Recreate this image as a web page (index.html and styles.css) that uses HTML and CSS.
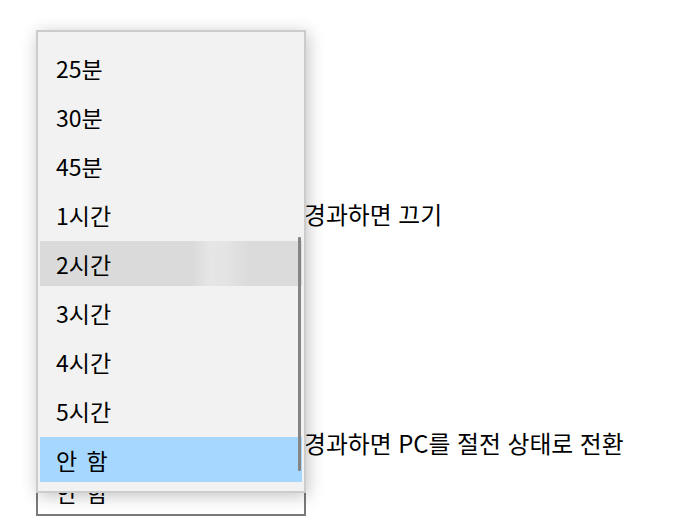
FILE: index.html
```html
<!DOCTYPE html>
<html lang="ko">
<head>
<meta charset="utf-8">
<link rel="stylesheet" href="styles.css">
</head>
<body>
<div class="page">
  <div class="setting first">
    <div class="label">경과하면 끄기</div>
    <div class="combo"></div>
  </div>
  <div class="setting second">
    <div class="label">경과하면 PC를 절전 상태로 전환</div>
    <div class="combo"><span>안 함</span><svg class="chev" width="12" height="8" viewBox="0 0 12 8"><path d="M1 1.5 L6 6.5 L11 1.5" fill="none" stroke="#000" stroke-width="1.4"/></svg></div>
  </div>

  <div class="popup">
    <ul class="list">
      <li class="item"><span>25분</span></li>
      <li class="item"><span>30분</span></li>
      <li class="item"><span>45분</span></li>
      <li class="item"><span>1시간</span></li>
      <li class="item hover"><span>2시간</span></li>
      <li class="item"><span>3시간</span></li>
      <li class="item"><span>4시간</span></li>
      <li class="item"><span>5시간</span></li>
      <li class="item selected"><span>안 함</span></li>
    </ul>
    <div class="scrollbar"></div>
  </div>
</div>
</body>
</html>
```

FILE: styles.css
```css
html, body {
  margin: 0;
  padding: 0;
  background: #ffffff;
}
body {
  font-family: "Noto Sans CJK KR", "Noto Sans", sans-serif;
  color: #000;
  width: 674px;
  height: 524px;
  overflow: hidden;
}
.page {
  position: relative;
  width: 674px;
  height: 524px;
  padding: 0 0 0 36px;
  box-sizing: border-box;
}
.setting {
  display: flex;
  flex-direction: column;
}
.setting.first {
  padding-top: 200px;
}
.setting.second {
  padding-top: 142px;
}
.label {
  margin-left: 268px;
  font-size: 23.8px;
  line-height: 28px;
  white-space: nowrap;
}
.combo {
  margin-top: 11px;
  width: 270px;
  height: 48px;
  box-sizing: border-box;
  border: 2px solid #7a7a7a;
  background: #fff;
  display: flex;
  align-items: center;
  justify-content: space-between;
  padding: 0 18px 0 18px;
  font-size: 23px;
  word-spacing: 3px;
}
.chev {
  margin-top: -6px;
}
.popup {
  position: absolute;
  left: 36px;
  top: 30px;
  width: 270px;
  height: 463px;
  box-sizing: border-box;
  border: 2px solid #cccccc;
  background: #f2f2f2;
  box-shadow: 2px 3px 16px rgba(0, 0, 0, 0.24);
  padding: 11px 0 7px 0;
  z-index: 2;
}
.list {
  list-style: none;
  margin: 0;
  padding: 0;
}
.item {
  height: 49px;
  padding: 2px 2px;
  box-sizing: border-box;
}
.item span {
  display: flex;
  align-items: center;
  height: 45px;
  padding-left: 16px;
  font-size: 23px;
  word-spacing: 3px;
}
.item.hover span {
  background: linear-gradient(to right, #dadada 0%, #dadada 58%, #e6e6e6 65%, #e3e3e3 72%, #dbdbdb 80%, #dbdbdb 100%);
}
.item.selected span {
  background: #a6d8ff;
}
.scrollbar {
  position: absolute;
  left: 260px;
  top: 205px;
  width: 3px;
  height: 234px;
  background: #858585;
  border-radius: 1px;
}
```
